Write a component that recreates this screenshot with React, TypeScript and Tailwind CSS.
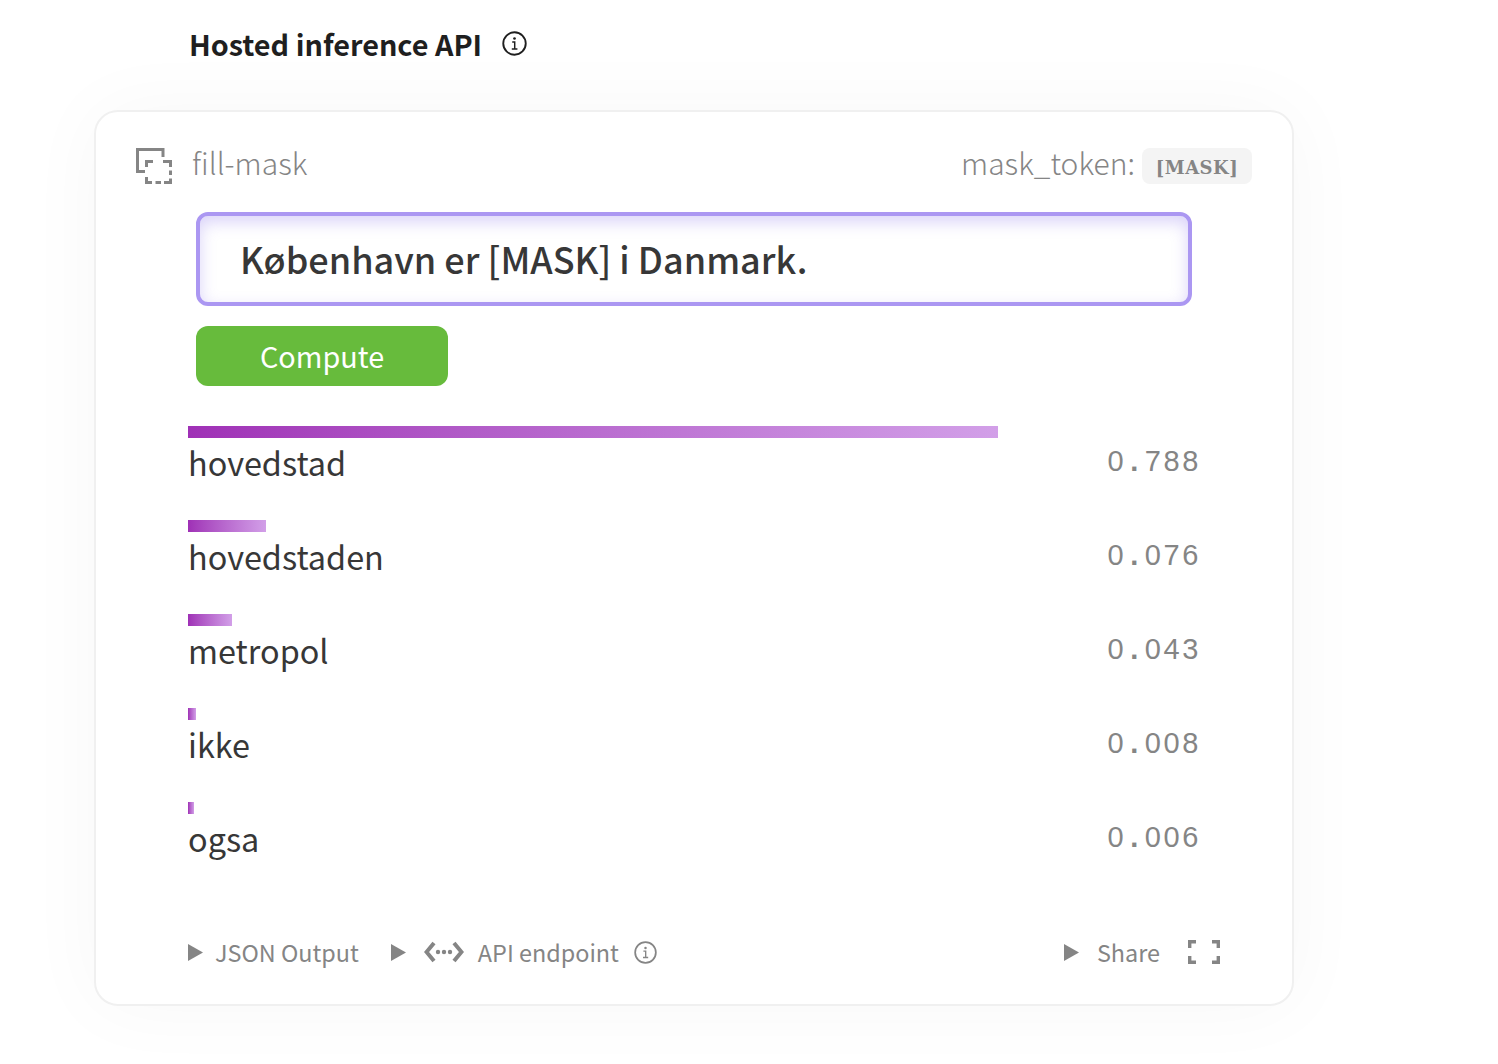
const sans = "font-['Noto_Sans_CJK_SC','Noto_Sans',sans-serif]";

const rows = [
  { label: "hovedstad", score: "788", width: 810 },
  { label: "hovedstaden", score: "076", width: 78 },
  { label: "metropol", score: "043", width: 44 },
  { label: "ikke", score: "008", width: 8 },
  { label: "ogsa", score: "006", width: 6 },
];

function InfoIcon({ className }: { className: string }) {
  return (
    <svg viewBox="0 0 24 24" fill="none" className={className}>
      <circle cx="12" cy="12" r="10.8" stroke="currentColor" strokeWidth="1.8" />
      <circle cx="12" cy="7.2" r="1.3" fill="currentColor" />
      <path d="M9.8 10.6h2.4v6.4M9.4 17.2h5.4" stroke="currentColor" strokeWidth="1.4" />
    </svg>
  );
}

function Triangle() {
  return (
    <svg viewBox="0 0 15 17" className="h-[17px] w-[15px] shrink-0 text-[#858585]">
      <path d="M0 0 15 8.5 0 17Z" fill="currentColor" />
    </svg>
  );
}

export default function App() {
  return (
    <div className={`h-[1064px] w-full overflow-hidden bg-white ${sans}`}>
      <div className="flex items-center pl-[189px] pt-[23px]">
        <h1 className="text-[28.8px] font-bold leading-[42px] text-[#1f1f1f]">Hosted inference API</h1>
        <InfoIcon className="ml-[20px] mb-[2px] h-[25px] w-[25px] text-[#1f1f1f]" />
      </div>

      <div className="ml-[94px] mt-[45px] h-[896px] w-[1200px] rounded-[24px] border-2 border-[#f0f0f0] bg-white shadow-[0_0_80px_rgba(0,0,0,0.035)]">
        <div className="mt-[36px] flex h-[36px] items-center justify-between px-[40px]">
          <div className="flex items-center">
            <svg viewBox="0 0 36 36" fill="none" className="h-[36px] w-[36px] text-[#858585]">
              <path d="M1.5 25V1.5H27V9M1.5 23.5H9" stroke="currentColor" strokeWidth="3" />
              <path d="M10.5 19V13.5H17M27 13.5H34.5V19M34.5 22.5V27M10.5 29V34.5H16M19.5 34.5H25M28 34.5H34.5V30.5" stroke="currentColor" strokeWidth="3" />
            </svg>
            <span className="ml-[20px] mb-[9px] text-[30px] font-light leading-[40px] text-[#858585]">fill-mask</span>
          </div>
          <div className="flex items-center">
            <span className="mb-[9px] text-[30px] font-light leading-[40px] text-[#858585]">mask_token:</span>
            <code className="ml-[7px] flex h-[36px] w-[110px] items-center justify-center rounded-[8px] bg-[#f4f4f4] pt-[2px] font-['DejaVu_Serif',serif] text-[18px] font-bold tracking-[0.5px] text-[#858585]">[MASK]</code>
          </div>
        </div>

        <div className="ml-[100px] mt-[28px] flex h-[94px] w-[996px] items-center rounded-[12px] border-[4px] border-[#ab97f2] bg-white pl-[40px] shadow-[inset_0_6px_16px_rgba(109,80,230,0.25)]">
          <span className="mb-[2px] text-[36px] font-medium leading-[48px] text-[#373737]">København er [MASK] i Danmark.</span>
        </div>

        <button className="ml-[100px] mt-[20px] block h-[60px] w-[252px] rounded-[12px] bg-[#67bb3c] text-[28.8px] font-normal text-white">Compute</button>

        <div className="ml-[92px] mt-[40px] w-[1012px]">
          {rows.map((r) => (
            <div key={r.label} className="flex h-[94px] items-start justify-between">
              <div>
                <div className="h-[12px] bg-gradient-to-r from-[#9f30b6] to-[#d29fe8]" style={{ width: r.width }} />
                <div className="text-[32.4px] font-normal leading-[48px] text-[#373737]">{r.label}</div>
              </div>
              <div className="-mr-[1px] mt-[20px] font-['Liberation_Sans',sans-serif] text-[29px] leading-[30px] tracking-[2.6px] text-[#858585]">
                0<span className="px-[4px] font-bold">.</span>{r.score}
              </div>
            </div>
          ))}
        </div>

        <div className="ml-[92px] mt-[39px] flex w-[1032px] items-center justify-between text-[23.4px] font-normal leading-[34px] text-[#858585]">
          <div className="flex items-center">
            <Triangle />
            <span className="ml-[12px]">JSON Output</span>
            <span className="ml-[32px]"><Triangle /></span>
            <svg viewBox="0 0 40 22" fill="none" className="ml-[18px] h-[22px] w-[40px] text-[#858585]">
              <path d="M10 2 2.5 11l7.5 9M30 2l7.5 9-7.5 9" stroke="currentColor" strokeWidth="4" />
              <circle cx="14" cy="11" r="2.2" fill="currentColor" />
              <circle cx="20" cy="11" r="2.2" fill="currentColor" />
              <circle cx="26" cy="11" r="2.2" fill="currentColor" />
            </svg>
            <span className="ml-[14px]">API endpoint</span>
            <InfoIcon className="ml-[15px] h-[23px] w-[23px] text-[#858585]" />
          </div>
          <div className="flex items-center">
            <Triangle />
            <span className="ml-[18px]">Share</span>
            <svg viewBox="0 0 32 24" fill="none" className="ml-[28px] h-[24px] w-[32px] text-[#858585]">
              <path d="M8 1.7H1.7V8M24 1.7h6.3V8M1.7 16v6.3H8M30.3 16v6.3H24" stroke="currentColor" strokeWidth="3.4" />
            </svg>
          </div>
        </div>
      </div>
    </div>
  );
}
